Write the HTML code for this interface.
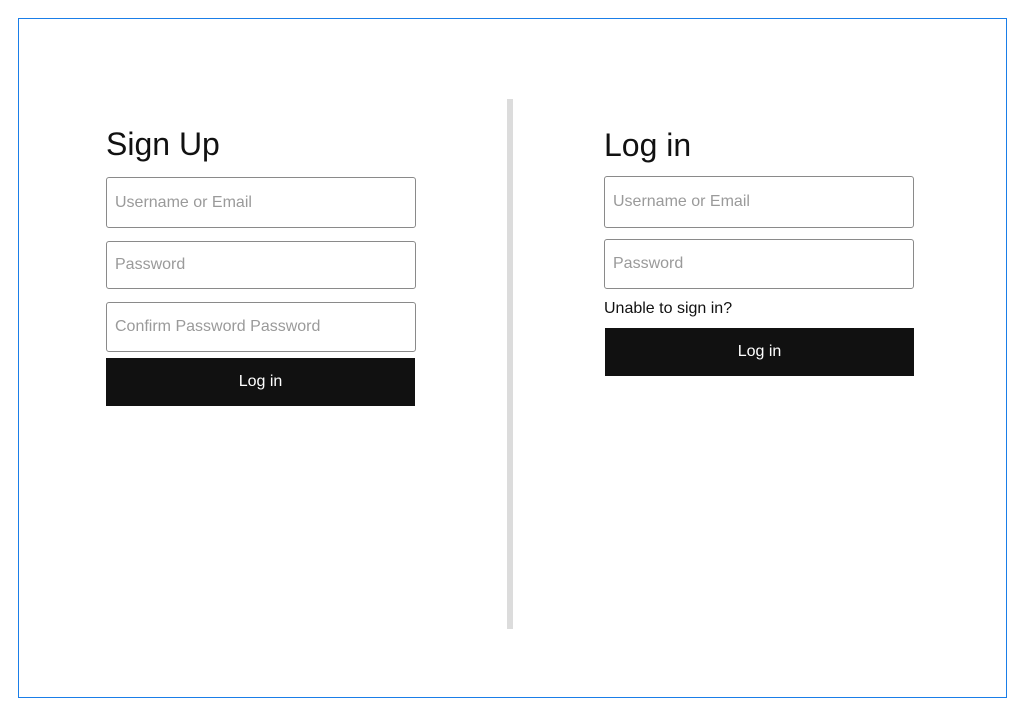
<!DOCTYPE html>
<html><head><style>
body{margin:0;background:#fff;font-family:"Liberation Sans",Arial,sans-serif;}
.frame{position:absolute;left:18px;top:18px;width:989px;height:680px;border:1px solid #1a7ee8;box-sizing:border-box;}
.div{position:absolute;left:507px;top:99px;width:6px;height:530px;background:#dcdcdc;}
.h{position:absolute;font-size:32px;color:#111;margin:0;font-weight:normal;}
.in{position:absolute;width:310px;box-sizing:border-box;border:1px solid #8a8a8a;border-radius:3px;color:#9a9a9a;font-size:16px;padding-left:8px;display:flex;align-items:center;}
.btn{position:absolute;width:309px;height:48px;background:#111;color:#fff;font-size:16px;display:flex;align-items:center;justify-content:center;}
.t{position:absolute;font-size:16px;color:#111;}
</style></head><body>
<div class="frame"></div>
<div class="div"></div>
<div class="h" style="left:106px;top:126px">Sign Up</div>
<div class="in" style="left:106px;top:177px;height:51px">Username or Email</div>
<div class="in" style="left:106px;top:241px;height:48px">Password</div>
<div class="in" style="left:106px;top:302px;height:50px">Confirm Password Password</div>
<div class="btn" style="left:106px;top:358px">Log in</div>
<div class="h" style="left:604px;top:127px">Log in</div>
<div class="in" style="left:604px;top:176px;height:52px">Username or Email</div>
<div class="in" style="left:604px;top:239px;height:50px">Password</div>
<div class="t" style="left:604px;top:300px">Unable to sign in?</div>
<div class="btn" style="left:605px;top:328px">Log in</div>
</body></html>
